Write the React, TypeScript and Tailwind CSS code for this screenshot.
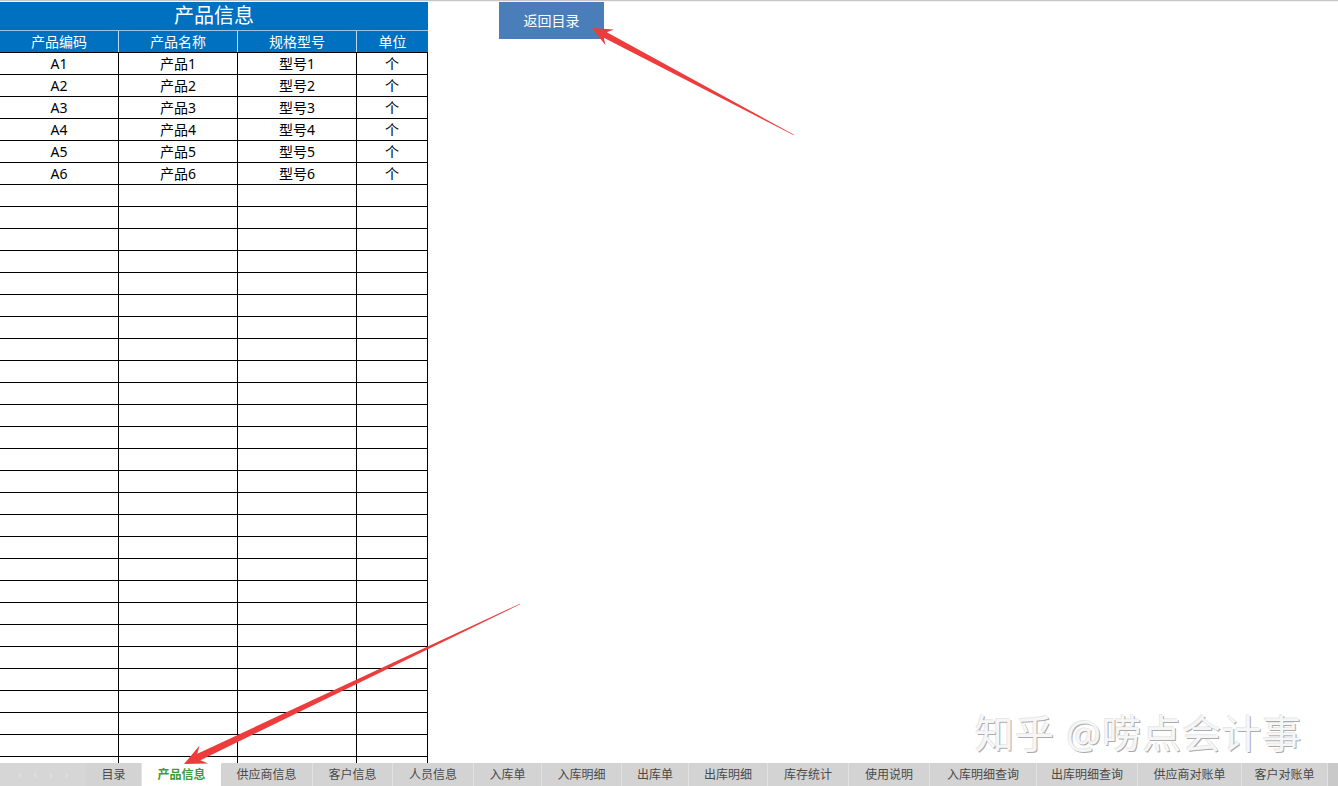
import React from "react";

const FONT = "font-['Noto_Sans','Noto_Sans_CJK_SC',sans-serif]";

const products = [
  { code: "A1", name: "产品1", model: "型号1", unit: "个" },
  { code: "A2", name: "产品2", model: "型号2", unit: "个" },
  { code: "A3", name: "产品3", model: "型号3", unit: "个" },
  { code: "A4", name: "产品4", model: "型号4", unit: "个" },
  { code: "A5", name: "产品5", model: "型号5", unit: "个" },
  { code: "A6", name: "产品6", model: "型号6", unit: "个" },
];

const tabs = [
  { label: "目录", w: 56 },
  { label: "产品信息", w: 79, active: true },
  { label: "供应商信息", w: 92 },
  { label: "客户信息", w: 80 },
  { label: "人员信息", w: 81 },
  { label: "入库单", w: 68 },
  { label: "入库明细", w: 80 },
  { label: "出库单", w: 67 },
  { label: "出库明细", w: 79 },
  { label: "库存统计", w: 81 },
  { label: "使用说明", w: 81 },
  { label: "入库明细查询", w: 107 },
  { label: "出库明细查询", w: 101 },
  { label: "供应商对账单", w: 104 },
  { label: "客户对账单", w: 86 },
];

// tapered arrow polygon: thin at tail, head at tip
function arrowPoints(
  tip: [number, number],
  tail: [number, number],
  headLen: number,
  headHalf: number,
  shaftHalf: number
) {
  const dx = tail[0] - tip[0];
  const dy = tail[1] - tip[1];
  const len = Math.hypot(dx, dy);
  const ux = dx / len;
  const uy = dy / len;
  const nx = -uy;
  const ny = ux;
  const bx = tip[0] + ux * headLen;
  const by = tip[1] + uy * headLen;
  const sx = tip[0] + ux * headLen * 0.75;
  const sy = tip[1] + uy * headLen * 0.75;
  const pts = [
    [tip[0], tip[1]],
    [bx + nx * headHalf, by + ny * headHalf],
    [sx + nx * shaftHalf, sy + ny * shaftHalf],
    [tail[0] + nx * 0.3, tail[1] + ny * 0.3],
    [tail[0] - nx * 0.3, tail[1] - ny * 0.3],
    [sx - nx * shaftHalf, sy - ny * shaftHalf],
    [bx - nx * headHalf, by - ny * headHalf],
  ];
  return pts.map((p) => p.map((v) => v.toFixed(1)).join(",")).join(" ");
}

function Row({ cells }: { cells: string[] }) {
  return (
    <div className="flex h-[22px] shrink-0 border-b border-black text-[14px] leading-[21px] text-black">
      <div className="w-[119px] border-r border-black text-center">{cells[0]}</div>
      <div className="w-[119px] border-r border-black text-center">{cells[1]}</div>
      <div className="w-[119px] border-r border-black text-center">{cells[2]}</div>
      <div className="w-[71px] border-r border-black text-center">{cells[3]}</div>
    </div>
  );
}

export default function App() {
  const empty = Array.from({ length: 28 });

  return (
    <div className={`relative flex h-[786px] w-[1338px] flex-col overflow-hidden bg-white ${FONT}`}>
      <div className="h-[2px] w-full shrink-0 border-t border-[#c6c6c6] bg-[#f3f3f3]" />

      <div className="flex h-[761px] shrink-0 overflow-hidden">
        {/* product table */}
        <div className="flex w-[428px] shrink-0 flex-col">
          <div className="flex h-[29px] shrink-0 items-center justify-center border-b border-[#9cc2e5] bg-[#0070c0] text-[20px] text-white">
            产品信息
          </div>
          <div className="flex h-[22px] shrink-0 border-b border-black bg-[#0070c0] text-[14px] leading-[21px] text-white">
            <div className="w-[119px] border-r border-[#bdd7ee] text-center">产品编码</div>
            <div className="w-[119px] border-r border-[#bdd7ee] text-center">产品名称</div>
            <div className="w-[119px] border-r border-[#bdd7ee] text-center">规格型号</div>
            <div className="w-[71px] text-center">单位</div>
          </div>
          {products.map((p) => (
            <Row key={p.code} cells={[p.code, p.name, p.model, p.unit]} />
          ))}
          {empty.map((_, i) => (
            <Row key={i} cells={["", "", "", ""]} />
          ))}
        </div>

        {/* floating button on the sheet */}
        <div className="flex-1">
          <div className="ml-[71px] flex h-[37px] w-[105px] items-center justify-center bg-[#4a7ebb] text-[14px] text-white">
            返回目录
          </div>
        </div>
      </div>

      {/* sheet tabs */}
      <div className="flex h-[23px] shrink-0 bg-[#c9c9c9] text-[12px] leading-[23px] text-[#4a4a4a]">
        <div className="flex w-[86px] items-center justify-around bg-[#d6d6d6] px-3 text-[#e4e4e4]">
          <span>‹</span>
          <span>‹</span>
          <span>›</span>
          <span>›</span>
        </div>
        {tabs.map((t) =>
          t.active ? (
            <div
              key={t.label}
              style={{ width: t.w }}
              className="bg-white text-center font-bold text-[#3d9a3d]"
            >
              {t.label}
            </div>
          ) : (
            <div
              key={t.label}
              style={{ width: t.w }}
              className="border-r border-[#e2e2e2] bg-[#d3d3d3] text-center"
            >
              {t.label}
            </div>
          )
        )}
      </div>

      {/* watermark */}
      <div className="absolute left-[975px] top-[710px] text-[39px] leading-[46px] tracking-[1px] text-[#f6f6f6] [text-shadow:1px_1px_0_#ababab,-1px_-1px_0_#e8e8e8]">
        知乎 @唠点会计事
      </div>

      {/* annotation arrows */}
      <svg className="pointer-events-none absolute left-0 top-0" width="1338" height="786">
        <polygon
          points={arrowPoints([592, 28], [794, 135], 20, 9, 3.2)}
          fill="#ee3b3b"
        />
        <polygon
          points={arrowPoints([184, 764], [520, 604], 22, 10, 3.6)}
          fill="#ee3b3b"
        />
      </svg>
    </div>
  );
}
